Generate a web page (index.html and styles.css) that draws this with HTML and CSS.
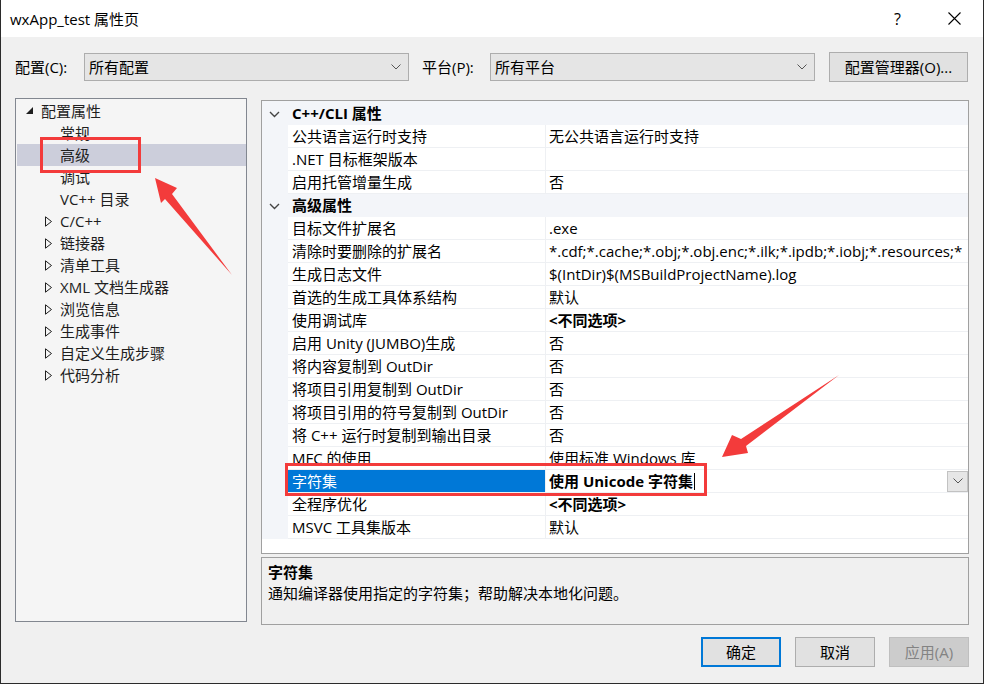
FILE: index.html
```html
<!DOCTYPE html>
<html lang="zh-CN">
<head>
<meta charset="utf-8">
<title>wxApp_test 属性页</title>
<link rel="stylesheet" href="styles.css">
</head>
<body>
<div class="window">
  <div class="titlebar">
    <div class="title">wxApp_test 属性页</div>
    <div class="cap cap-help">?</div>
    <div class="cap">
      <svg width="13" height="13" viewBox="0 0 13 13"><path d="M0.5 0.5 L12.5 12.5 M12.5 0.5 L0.5 12.5" stroke="#000" stroke-width="1.1" fill="none"/></svg>
    </div>
  </div>

  <div class="toolbar">
    <span class="lbl lbl-cfg">配置(C):</span>
    <div class="combo"><span>所有配置</span>
      <svg class="chev" width="10" height="6" viewBox="0 0 10 6"><polyline points="0.5,0.5 5,5 9.5,0.5" stroke="#555" fill="none"/></svg>
    </div>
    <span class="lbl lbl-plat">平台(P):</span>
    <div class="combo"><span>所有平台</span>
      <svg class="chev" width="10" height="6" viewBox="0 0 10 6"><polyline points="0.5,0.5 5,5 9.5,0.5" stroke="#555" fill="none"/></svg>
    </div>
    <div class="btn btn-mgr">配置管理器(O)...</div>
  </div>

  <div class="main">
    <div class="tree">
      <div class="trow root"><span class="tw"><svg width="8" height="8" viewBox="0 0 8 8"><polygon points="0,7 7,7 7,0" fill="#1e1e1e"/></svg></span>配置属性</div>
      <div class="trow child"><span class="tw"></span>常规</div>
      <div class="trow child sel"><span class="tw"></span>高级</div>
      <div class="trow child"><span class="tw"></span>调试</div>
      <div class="trow child"><span class="tw"></span>VC++ 目录</div>
      <div class="trow child"><span class="tw"><svg width="8" height="11" viewBox="0 0 8 11"><polygon points="0.5,0.8 6.5,5.5 0.5,10.2" fill="none" stroke="#1e1e1e"/></svg></span>C/C++</div>
      <div class="trow child"><span class="tw"><svg width="8" height="11" viewBox="0 0 8 11"><polygon points="0.5,0.8 6.5,5.5 0.5,10.2" fill="none" stroke="#1e1e1e"/></svg></span>链接器</div>
      <div class="trow child"><span class="tw"><svg width="8" height="11" viewBox="0 0 8 11"><polygon points="0.5,0.8 6.5,5.5 0.5,10.2" fill="none" stroke="#1e1e1e"/></svg></span>清单工具</div>
      <div class="trow child"><span class="tw"><svg width="8" height="11" viewBox="0 0 8 11"><polygon points="0.5,0.8 6.5,5.5 0.5,10.2" fill="none" stroke="#1e1e1e"/></svg></span>XML 文档生成器</div>
      <div class="trow child"><span class="tw"><svg width="8" height="11" viewBox="0 0 8 11"><polygon points="0.5,0.8 6.5,5.5 0.5,10.2" fill="none" stroke="#1e1e1e"/></svg></span>浏览信息</div>
      <div class="trow child"><span class="tw"><svg width="8" height="11" viewBox="0 0 8 11"><polygon points="0.5,0.8 6.5,5.5 0.5,10.2" fill="none" stroke="#1e1e1e"/></svg></span>生成事件</div>
      <div class="trow child"><span class="tw"><svg width="8" height="11" viewBox="0 0 8 11"><polygon points="0.5,0.8 6.5,5.5 0.5,10.2" fill="none" stroke="#1e1e1e"/></svg></span>自定义生成步骤</div>
      <div class="trow child"><span class="tw"><svg width="8" height="11" viewBox="0 0 8 11"><polygon points="0.5,0.8 6.5,5.5 0.5,10.2" fill="none" stroke="#1e1e1e"/></svg></span>代码分析</div>
    </div>

    <div class="right">
      <div class="grid">
        <div class="row cat">
          <span class="gut"><svg width="11" height="7" viewBox="0 0 11 7"><polyline points="1,1 5.5,5.5 10,1" stroke="#444" stroke-width="1.4" fill="none"/></svg></span>
          <span class="catname">C++/CLI 属性</span>
        </div>
        <div class="row"><span class="gut"></span><span class="nm">公共语言运行时支持</span><span class="val">无公共语言运行时支持</span></div>
        <div class="row"><span class="gut"></span><span class="nm">.NET 目标框架版本</span><span class="val"></span></div>
        <div class="row"><span class="gut"></span><span class="nm">启用托管增量生成</span><span class="val">否</span></div>
        <div class="row cat">
          <span class="gut"><svg width="11" height="7" viewBox="0 0 11 7"><polyline points="1,1 5.5,5.5 10,1" stroke="#444" stroke-width="1.4" fill="none"/></svg></span>
          <span class="catname">高级属性</span>
        </div>
        <div class="row"><span class="gut"></span><span class="nm">目标文件扩展名</span><span class="val">.exe</span></div>
        <div class="row"><span class="gut"></span><span class="nm">清除时要删除的扩展名</span><span class="val">*.cdf;*.cache;*.obj;*.obj.enc;*.ilk;*.ipdb;*.iobj;*.resources;*</span></div>
        <div class="row"><span class="gut"></span><span class="nm">生成日志文件</span><span class="val">$(IntDir)$(MSBuildProjectName).log</span></div>
        <div class="row"><span class="gut"></span><span class="nm">首选的生成工具体系结构</span><span class="val">默认</span></div>
        <div class="row"><span class="gut"></span><span class="nm">使用调试库</span><span class="val b">&lt;不同选项&gt;</span></div>
        <div class="row"><span class="gut"></span><span class="nm">启用 Unity (JUMBO)生成</span><span class="val">否</span></div>
        <div class="row"><span class="gut"></span><span class="nm">将内容复制到 OutDir</span><span class="val">否</span></div>
        <div class="row"><span class="gut"></span><span class="nm">将项目引用复制到 OutDir</span><span class="val">否</span></div>
        <div class="row"><span class="gut"></span><span class="nm">将项目引用的符号复制到 OutDir</span><span class="val">否</span></div>
        <div class="row"><span class="gut"></span><span class="nm">将 C++ 运行时复制到输出目录</span><span class="val">否</span></div>
        <div class="row"><span class="gut"></span><span class="nm">MFC 的使用</span><span class="val">使用标准 Windows 库</span></div>
        <div class="row selrow"><span class="gut"></span><span class="nm">字符集</span>
          <span class="val b editval"><span>使用 Unicode 字符集</span><span class="caret"></span><span class="spacer"></span>
            <span class="dd"><svg width="10" height="6" viewBox="0 0 10 6"><polyline points="0.5,0.5 5,5 9.5,0.5" stroke="#555" fill="none"/></svg></span>
          </span>
        </div>
        <div class="row"><span class="gut"></span><span class="nm">全程序优化</span><span class="val b">&lt;不同选项&gt;</span></div>
        <div class="row"><span class="gut"></span><span class="nm">MSVC 工具集版本</span><span class="val">默认</span></div>
      </div>
      <div class="desc">
        <div class="desc-title">字符集</div>
        <div class="desc-text">通知编译器使用指定的字符集；帮助解决本地化问题。</div>
      </div>
    </div>
  </div>

  <div class="buttons">
    <div class="btn dbtn ok">确定</div>
    <div class="btn dbtn">取消</div>
    <div class="btn dbtn disabled">应用(A)</div>
  </div>

  <svg class="overlay" width="984" height="684" viewBox="0 0 984 684">
    <rect x="41.5" y="138.5" width="98" height="33" fill="none" stroke="#f33b3b" stroke-width="3"/>
    <rect x="286.5" y="464.5" width="419" height="30" fill="none" stroke="#f33b3b" stroke-width="3"/>
    <polygon points="155,178 177,188 172,194 232,275 165,199 161,203" fill="#f33b3b"/>
    <polygon points="722,457 732,435 741,439 839,375 746,446 748,453" fill="#f33b3b"/>
  </svg>
</div>
</body>
</html>
```

FILE: styles.css
```css
* { box-sizing: border-box; }
html, body { margin: 0; padding: 0; }
body {
  width: 984px;
  height: 684px;
  overflow: hidden;
  background: #f0f0f0;
  font-family: "Open Sans", "Noto Sans CJK SC", sans-serif;
  font-size: 15px;
  color: #000;
}
.window {
  position: relative;
  width: 984px;
  height: 684px;
  background: #f0f0f0;
  border: 1px solid #2b2b2b;
  border-top: none;
  display: flex;
  flex-direction: column;
}
.titlebar {
  height: 37px;
  background: #fff;
  display: flex;
  align-items: center;
  flex-shrink: 0;
}
.title { flex: 1; padding-left: 9px; font-size: 15px; line-height: 20px; }
.cap {
  width: 57px;
  height: 37px;
  display: flex;
  align-items: center;
  justify-content: center;
}
.cap-help { font-size: 16px; padding-top: 1px; }

.toolbar {
  margin-top: 15px;
  height: 30px;
  padding: 0 14px;
  display: flex;
  align-items: center;
  flex-shrink: 0;
}
.lbl { line-height: 20px; }
.lbl-cfg { width: 69px; }
.lbl-plat { width: 68px; margin-left: 13px; }
.combo {
  width: 325px;
  height: 28px;
  background: #e5e5e5;
  border: 1px solid #adadad;
  display: flex;
  align-items: center;
  padding: 0 6px 0 4px;
}
.combo span { flex: 1; line-height: 20px; }
.chev { margin-right: 1px; }
.btn {
  background: #e1e1e1;
  border: 1px solid #adadad;
  display: flex;
  align-items: center;
  justify-content: center;
  line-height: 20px;
}
.btn-mgr { width: 139px; height: 30px; margin-left: 14px; }

.main {
  margin-top: 16px;
  padding: 0 14px;
  display: flex;
  gap: 14px;
  height: 527px;
  flex-shrink: 0;
}
.tree {
  width: 232px;
  height: 524px;
  background: #f5f5f5;
  border: 1px solid #828790;
  padding: 1px 0 1px 1px;
}
.trow {
  height: 22px;
  display: flex;
  align-items: center;
  line-height: 20px;
  color: #1e1e1e;
  white-space: nowrap;
}
.trow.root { padding-left: 9px; }
.trow.child { padding-left: 28px; }
.trow.sel { background: #cccedb; }
.tw {
  width: 15px;
  height: 22px;
  display: flex;
  align-items: center;
  flex-shrink: 0;
}
.trow.root .tw { padding-bottom: 1px; }

.right {
  width: 708px;
  padding-top: 2px;
  display: flex;
  flex-direction: column;
}
.grid {
  height: 454px;
  background: #fff;
  border: 1px solid #a0a0a0;
  overflow: hidden;
}
.row {
  height: 23px;
  display: grid;
  grid-template-columns: 26px 258px 1fr;
}
.row.cat:first-child { height: 24px; padding-top: 1px; }
.gut {
  background: #f3f5f9;
  display: flex;
  align-items: center;
  justify-content: center;
}
.nm, .val {
  border-bottom: 1px solid #eef0f3;
  line-height: 22px;
  white-space: nowrap;
  overflow: hidden;
}
.nm { padding-left: 4px; border-right: 1px solid #eef0f3; }
.val { padding-left: 3px; }
.b { font-weight: 700; }
.cat { background: #f3f5f9; }
.cat .gut { justify-content: flex-start; padding-left: 7px; padding-top: 1px; }
.catname {
  grid-column: 2 / 4;
  padding-left: 4px;
  font-weight: 700;
  line-height: 22px;
}
.selrow .nm { background: #0078d7; color: #fff; }
.editval { display: flex; align-items: center; }
.caret { width: 1px; height: 17px; background: #000; margin-left: 1px; }
.spacer { flex: 1; }
.dd {
  width: 21px;
  height: 21px;
  background: #e6e6e6;
  border: 1px solid #c2c2c2;
  display: flex;
  align-items: center;
  justify-content: center;
}

.desc {
  margin-top: 3px;
  height: 68px;
  border: 1px solid #a0a0a0;
  background: #f0f0f0;
  padding: 4px 6px;
  line-height: 21px;
}
.desc-title { font-weight: 700; }

.buttons {
  margin-top: 12px;
  padding-right: 14px;
  display: flex;
  justify-content: flex-end;
  gap: 14px;
}
.dbtn { width: 80px; height: 30px; }
.dbtn.ok { border: 2px solid #0078d7; }
.dbtn.disabled { background: #cccccc; border-color: #bfbfbf; color: #838383; }

.overlay {
  position: absolute;
  left: -1px;
  top: 0;
  pointer-events: none;
}
```
